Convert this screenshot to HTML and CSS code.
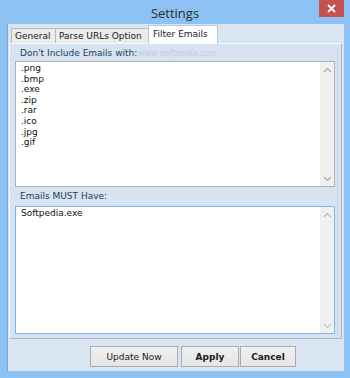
FILE: index.html
```html
<!DOCTYPE html>
<html>
<head>
<meta charset="utf-8">
<link rel="stylesheet" href="styles.css">
</head>
<body>
<div class="window">
  <div class="titlebar">
    <div class="title">Settings</div>
    <div class="close">
      <svg width="9" height="9" viewBox="0 0 9 9"><path d="M1 1 L8 8 M8 1 L1 8" stroke="#fff" stroke-width="1.8"/></svg>
    </div>
  </div>
  <div class="client">
    <div class="tabs">
      <div class="tab tab-general">General</div>
      <div class="tab tab-parse">Parse URLs Option</div>
      <div class="tab tab-active">Filter Emails</div>
    </div>
    <div class="panel">
      <div class="group">
        <div class="group-label">Don't Include Emails with:<span class="wm">www.softpedia.com</span></div>
        <div class="textbox tb1">
          <div class="tb-text">.png<br>.bmp<br>.exe<br>.zip<br>.rar<br>.ico<br>.jpg<br>.gif</div>
          <div class="scroll">
            <svg width="9" height="6" viewBox="0 0 9 6"><path d="M1 5 L4.5 1.5 L8 5" fill="none" stroke="#a8a8a8" stroke-width="1.2"/></svg>
            <svg width="9" height="6" viewBox="0 0 9 6"><path d="M1 1 L4.5 4.5 L8 1" fill="none" stroke="#a8a8a8" stroke-width="1.2"/></svg>
          </div>
        </div>
      </div>
      <div class="group">
        <div class="group-label">Emails MUST Have:</div>
        <div class="textbox tb2">
          <div class="tb-text">Softpedia.exe</div>
          <div class="scroll">
            <svg width="9" height="6" viewBox="0 0 9 6"><path d="M1 5 L4.5 1.5 L8 5" fill="none" stroke="#b8b8b8" stroke-width="1.2"/></svg>
            <svg width="9" height="6" viewBox="0 0 9 6"><path d="M1 1 L4.5 4.5 L8 1" fill="none" stroke="#c8c8c8" stroke-width="1.2"/></svg>
          </div>
        </div>
      </div>
    </div>
    <div class="buttons">
      <div class="btn btn-update">Update Now</div>
      <div class="btn btn-apply bold">Apply</div>
      <div class="btn btn-cancel bold">Cancel</div>
    </div>
  </div>
</div>
</body>
</html>
```
FILE: styles.css
```css
html, body {
  margin: 0;
  padding: 0;
  background: #8cc3f4;
}
.window {
  width: 350px;
  height: 378px;
  background: #8cc3f4;
  display: flex;
  flex-direction: column;
  font-family: "DejaVu Sans", "Liberation Sans", sans-serif;
  font-size: 9px;
  color: #1a1a1a;
}
.titlebar {
  height: 24px;
  position: relative;
  display: flex;
  justify-content: center;
  align-items: flex-start;
}
.title {
  margin-top: 4px;
  font-family: "Open Sans", "Noto Sans", sans-serif;
  font-size: 13px;
  color: #2b2b2b;
}
.close {
  position: absolute;
  top: 0;
  left: 319px;
  width: 25px;
  height: 17px;
  background: #c75050;
  display: flex;
  align-items: center;
  justify-content: center;
}
.client {
  margin: 0 6px 7px 7px;
  flex: 1;
  background: #dae5f2;
  border-left: 1px solid #79a9d8;
  display: flex;
  flex-direction: column;
  padding: 1px 2px 0 1px;
}
.tabs {
  display: flex;
  align-items: flex-end;
  height: 18px;
  padding-left: 2px;
  position: relative;
  z-index: 1;
}
.tab {
  height: 15px;
  box-sizing: border-box;
  border: 1px solid #b5bcc5;
  border-bottom: none;
  background: #ebebeb;
  padding: 0 3px;
  line-height: 14px;
  color: #1a1a1a;
  margin-right: -1px;
  white-space: nowrap;
  overflow: hidden;
}
.tab-general { width: 45px; }
.tab-parse { width: 95px; }
.tab-active {
  height: 19px;
  width: 70px;
  background: #ffffff;
  border-color: #b9c6d4;
  line-height: 16px;
  margin-left: -1px;
  margin-bottom: -1px;
  padding-left: 4px;
}
.panel {
  height: 296px;
  box-sizing: border-box;
  border: 1px solid #f6f9fc;
  border-right-color: #aab7c4;
  border-bottom-color: #aab7c4;
  background: #d7e3f1;
  padding: 4px 3px 0 5px;
  display: flex;
  flex-direction: column;
}
.group {
  display: flex;
  flex-direction: column;
  border-right: 1px solid #c9d6e4;
}
.group-label {
  height: 13px;
  line-height: 11px;
  padding-left: 5px;
  color: #1f3d5a;
  white-space: nowrap;
  overflow: hidden;
}
.wm {
  color: #c3ccd6;
  font-style: italic;
  margin-left: 1px;
  font-size: 8px;
}
.textbox {
  box-sizing: border-box;
  margin-right: 2px;
  background: #ffffff;
  border: 1px solid #a9b3bd;
  display: flex;
}
.tb1 { height: 126px; margin-bottom: 4px; }
.tb2 { height: 128px; border-color: #7eb4ea; margin-top: 2px; }
.tb-text {
  flex: 1;
  padding: 1px 0 0 5px;
  line-height: 10.6px;
  color: #111;
}
.scroll {
  width: 14px;
  background: #f0f0f0;
  display: flex;
  flex-direction: column;
  justify-content: space-between;
  align-items: center;
  padding: 5px 0 4px;
}
.buttons {
  flex: 1;
  display: flex;
  justify-content: flex-start;
  align-items: flex-start;
  padding: 7px 0 0 81px;
  gap: 2px;
}
.btn {
  box-sizing: border-box;
  height: 21px;
  border: 1px solid #acacac;
  background: linear-gradient(#f0f0f0, #e5e5e5);
  display: flex;
  align-items: center;
  justify-content: center;
  color: #1a1a1a;
}
.btn-update { width: 88px; }
.btn-apply { width: 58px; margin-left: 1px; }
.btn-cancel { width: 56px; margin-left: -1px; }
.bold { font-weight: bold; }
```
